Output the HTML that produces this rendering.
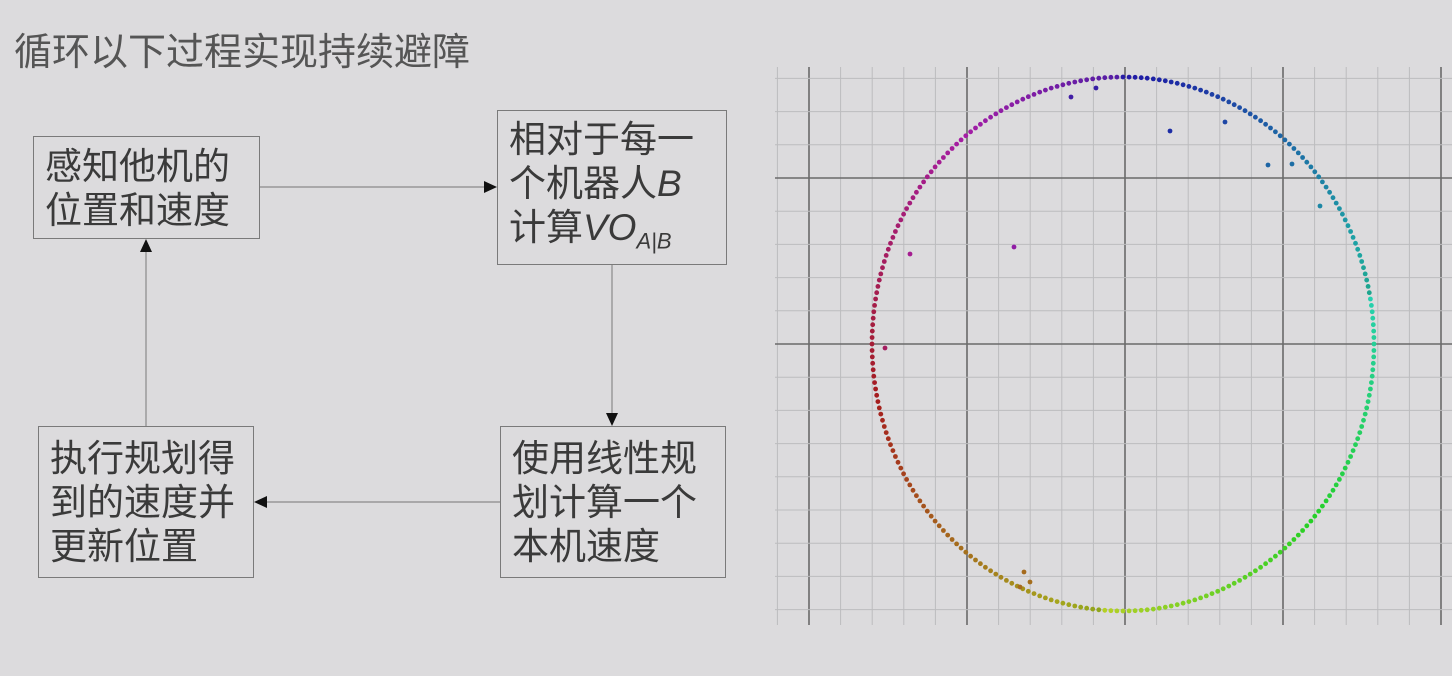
<!DOCTYPE html>
<html><head><meta charset="utf-8"><style>
html,body{margin:0;padding:0}
body{width:1452px;height:676px;background:#dcdbdd;position:relative;overflow:hidden;font-family:"Liberation Sans","Noto Sans CJK SC",sans-serif;color:#3a3a3a}
.t{position:absolute;font-size:37px;line-height:44px;white-space:nowrap}
.box{position:absolute;border:1.5px solid #7a7a7a;box-sizing:border-box}
i{font-family:"Liberation Sans",sans-serif;font-style:italic}
</style></head><body>
<div class="t" style="left:14px;top:31px;color:#555;font-size:38px">循环以下过程实现持续避障</div>
<div class="box" style="left:33px;top:136px;width:227px;height:103px"></div>
<div class="t" style="left:45px;top:145px">感知他机的<br>位置和速度</div>
<div class="box" style="left:497px;top:110px;width:230px;height:155px"></div>
<div class="t" style="left:509px;top:118px">相对于每一<br>个机器人<i>B</i><br>计算<i>VO</i><sub style="font-size:22px;font-family:'Liberation Sans',sans-serif;font-style:italic">A|B</sub></div>
<div class="box" style="left:500px;top:426px;width:226px;height:152px"></div>
<div class="t" style="left:512px;top:437px">使用线性规<br>划计算一个<br>本机速度</div>
<div class="box" style="left:38px;top:426px;width:216px;height:152px"></div>
<div class="t" style="left:50px;top:437px">执行规划得<br>到的速度并<br>更新位置</div>
<svg width="1452" height="676" style="position:absolute;left:0;top:0">
<g stroke="#8a8a8a" stroke-width="1.2" fill="none">
<line x1="260" y1="187" x2="486" y2="187"/>
<line x1="612" y1="265" x2="612" y2="414"/>
<line x1="500" y1="502" x2="266" y2="502"/>
<line x1="146" y1="426" x2="146" y2="250"/>
</g>
<g fill="#111">
<polygon points="497,187 484,181 484,193"/>
<polygon points="612,426 606,413 618,413"/>
<polygon points="254,502 267,496 267,508"/>
<polygon points="146,239 140,252 152,252"/>
</g>
<g id="grid"></g>
<g id="dots"></g>
</svg>
<script>
var g=document.getElementById('grid'),s='';
var mx=[809,967,1123,1281,1439],my=[178,344,512];
var dx=(967-809)/5,dy=(344-178)/5;
for(var x=809-dx*1;x<1452;x+=dx){var maj=mx.some(function(m){return Math.abs(m-x)<2});s+='<line x1="'+x+'" y1="67" x2="'+x+'" y2="625" stroke="'+(maj?'#6a6a6a':'#bcbcbe')+'" stroke-width="'+(maj?1.6:1)+'"/>';}
for(var y=178-dy*3;y<630;y+=dy){if(y<66)continue;var maj=my.some(function(m){return Math.abs(m-y)<2});s+='<line x1="775" y1="'+y+'" x2="1452" y2="'+y+'" stroke="'+(maj?'#6a6a6a':'#bcbcbe')+'" stroke-width="'+(maj?1.6:1)+'"/>';}
g.innerHTML=s;
var d='',cx=1123,cy=344,rx=251,ry=267,N=260;
function col(th){var deg=th*180/Math.PI;var h=(245-deg*0.95+720)%360;var l=(h>70&&h<170)?48:38;return 'hsl('+h.toFixed(0)+',70%,'+l+'%)';}
for(var k=0;k<N;k++){var th=k/N*2*Math.PI;var x=cx+rx*Math.sin(th),y=cy-ry*Math.cos(th);
d+='<circle cx="'+x.toFixed(1)+'" cy="'+y.toFixed(1)+'" r="2.4" fill="'+col(th)+'"/>';}
[[1071,97],[1096,88],[1170,131],[1225,122],[1268,165],[1292,164],[1320,206],[910,254],[1014,247],[885,348],[1024,572],[1030,582],[1020,587]].forEach(function(p){var th=Math.atan2(p[0]-cx,-(p[1]-cy));d+='<circle cx="'+p[0]+'" cy="'+p[1]+'" r="2.4" fill="'+col(th)+'"/>';});
document.getElementById('dots').innerHTML=d;
</script>
</body></html>
